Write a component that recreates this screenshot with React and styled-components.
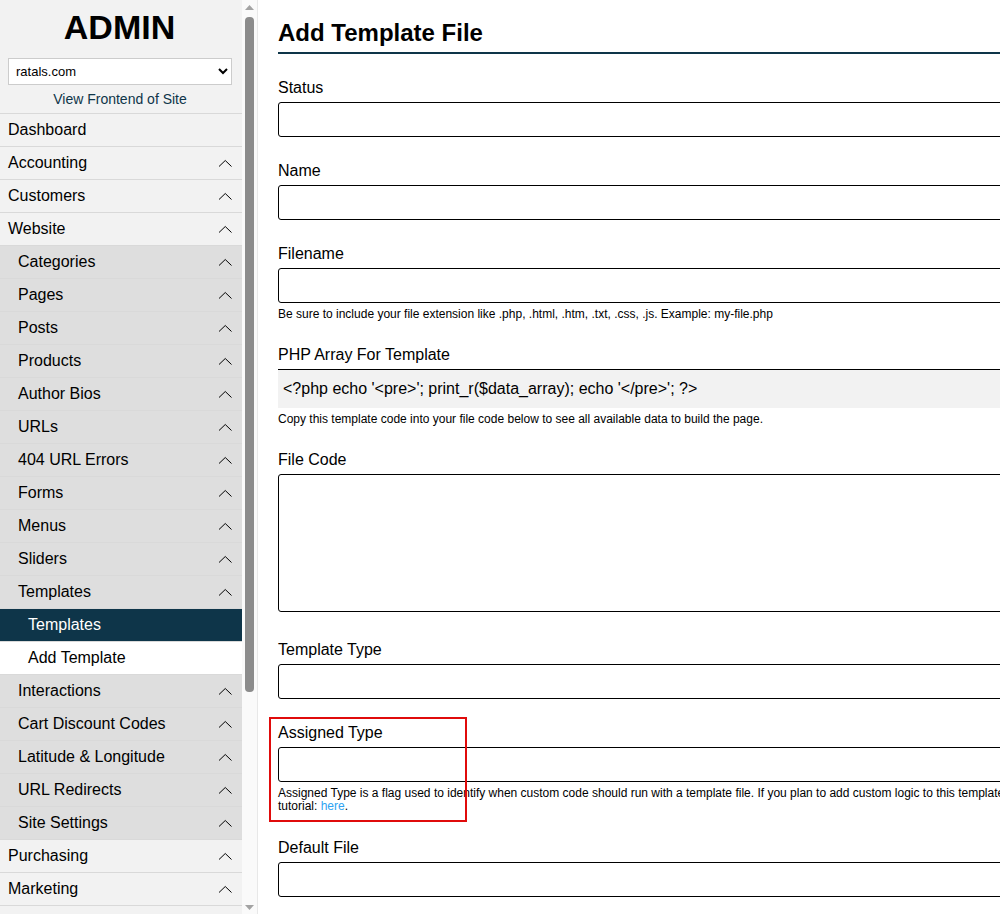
import { createGlobalStyle } from 'styled-components';
import styled from 'styled-components';

const GlobalStyle = createGlobalStyle`
	html, body {
		margin: 0;
		height: 100%;
		overflow: hidden;
		background: #fff;
		font-family: "Liberation Sans", Arial, sans-serif;
		color: #000;
	}
`;

const Page = styled.div`
	display: flex;
	width: 1000px;
	height: 914px;
	overflow: hidden;
`;

const Sidebar = styled.aside`
	flex: 0 0 258px;
	display: flex;
	height: 914px;
	box-sizing: border-box;
	border-right: 1px solid #e8e8e8;
	overflow: hidden;
`;

const SidebarInner = styled.div`
	flex: 0 0 242px;
	background: #f2f2f2;
	overflow: hidden;
`;

const Brand = styled.h1`
	margin: 0;
	padding: 7px 3px 0 0;
	height: 50px;
	box-sizing: border-box;
	font-size: 34px;
	line-height: 40px;
	font-weight: 700;
	text-align: center;
`;

const SiteSelect = styled.select`
	display: block;
	box-sizing: border-box;
	width: 224px;
	height: 27px;
	margin: 8px 0 0 8px;
	padding: 0 3px;
	border: 1px solid #ccc;
	background-color: #fff;
	font-family: inherit;
	font-size: 13px;
	color: #000;
`;

const FrontendLink = styled.a`
	display: block;
	height: 28px;
	padding-right: 2px;
	font-size: 14px;
	line-height: 29px;
	text-align: center;
	color: #0e3549;
`;

const NavRow = styled.div`
	display: flex;
	align-items: center;
	justify-content: space-between;
	box-sizing: border-box;
	height: 33px;
	padding: 0 8px 1px ${props => props.$indent}px;
	border-top: 1px solid #d9d9d9;
	background: ${props => props.$bg};
	color: ${props => props.$color};
	font-size: 16px;
`;

const Chevron = styled.svg`
	display: block;
	width: 14px;
	height: 8px;
	margin: 1px 2px 0 0;
	fill: none;
	stroke: #000;
	stroke-width: 1;
`;

const Scrollbar = styled.div`
	flex: 0 0 15px;
	display: flex;
	flex-direction: column;
	align-items: center;
	background: #fafafa;
`;

const ArrowButton = styled.svg`
	flex: 0 0 5px;
	width: 9px;
	height: 5px;
	margin: ${props => props.$margin};
	fill: #a3a3a3;
`;

const Thumb = styled.div`
	flex: 0 0 675px;
	width: 9px;
	border-radius: 4px;
	background: #8c8c8c;
`;

const ScrollSpacer = styled.div`
	flex: 1;
`;

const Main = styled.main`
	flex: 0 0 835px;
	box-sizing: border-box;
	padding: 0 0 0 20px;
`;

const Title = styled.h2`
	margin: 18px 0 0;
	padding-bottom: 5px;
	height: 36px;
	box-sizing: border-box;
	border-bottom: 2px solid #0e3549;
	font-size: 24px;
	line-height: 30px;
	font-weight: 700;
`;

const Field = styled.div`
	margin-top: ${props => props.$top}px;
`;

const Label = styled.label`
	display: block;
	height: 23px;
	font-size: 16px;
	line-height: 18px;
`;

const Input = styled.input`
	display: block;
	box-sizing: border-box;
	width: 100%;
	height: 35px;
	border: 1px solid #000;
	border-radius: 3px;
	background: #fff;
`;

const CodeArea = styled.textarea`
	display: block;
	box-sizing: border-box;
	width: 100%;
	height: 138px;
	border: 1px solid #000;
	border-radius: 3px;
	background: #fff;
	resize: none;
`;

const Help = styled.p`
	margin: ${props => props.$gap || 4}px 0 0;
	font-size: 12px;
	line-height: ${props => props.$line || 14}px;
`;

const HelpLink = styled.a`
	color: #2ea3f2;
`;

const CodeSample = styled.div`
	box-sizing: border-box;
	height: 39px;
	padding-left: 5px;
	border-top: 1px solid #000;
	background: #f2f2f2;
	font-size: 16px;
	line-height: 37px;
`;

const Outline = styled.div`
	position: absolute;
	left: 269px;
	top: 717px;
	width: 198px;
	height: 105px;
	box-sizing: border-box;
	border: 2px solid #e00b0b;
	pointer-events: none;
`;

const sidebarItems = [
	{ label: 'Dashboard', level: 0, noChevron: true },
	{ label: 'Accounting', level: 0 },
	{ label: 'Customers', level: 0 },
	{ label: 'Website', level: 0 },
	{ label: 'Categories', level: 1 },
	{ label: 'Pages', level: 1 },
	{ label: 'Posts', level: 1 },
	{ label: 'Products', level: 1 },
	{ label: 'Author Bios', level: 1 },
	{ label: 'URLs', level: 1 },
	{ label: '404 URL Errors', level: 1 },
	{ label: 'Forms', level: 1 },
	{ label: 'Menus', level: 1 },
	{ label: 'Sliders', level: 1 },
	{ label: 'Templates', level: 1 },
	{ label: 'Templates', level: 2, active: true },
	{ label: 'Add Template', level: 2 },
	{ label: 'Interactions', level: 1 },
	{ label: 'Cart Discount Codes', level: 1 },
	{ label: 'Latitude & Longitude', level: 1 },
	{ label: 'URL Redirects', level: 1 },
	{ label: 'Site Settings', level: 1 },
	{ label: 'Purchasing', level: 0 },
	{ label: 'Marketing', level: 0 },
	{ label: '', level: 0, noChevron: true }
];

const levelBg = ['#f2f2f2', '#dedede', '#fff'];

const App = () => (
	<>
		<GlobalStyle />
		<Page>
			<Sidebar>
				<SidebarInner>
					<Brand>ADMIN</Brand>
					<SiteSelect defaultValue="ratals.com">
						<option>ratals.com</option>
					</SiteSelect>
					<FrontendLink>View Frontend of Site</FrontendLink>
					{sidebarItems.map((item, index) => (
						<NavRow
							key={index}
							$indent={8 + item.level * 10}
							$bg={item.active ? '#0e3549' : levelBg[item.level]}
							$color={item.active ? '#fff' : '#000'}
						>
							{item.label}
							{!item.noChevron && item.level < 2 && (
								<Chevron viewBox="0 0 14 8">
									<path d="M1 7.5 L7.25 1.5 L13.5 7.5" />
								</Chevron>
							)}
						</NavRow>
					))}
				</SidebarInner>
				<Scrollbar>
					<ArrowButton viewBox="0 0 9 5" $margin="5px 0 7px">
						<path d="M4.5 0 L9 5 L0 5 Z" />
					</ArrowButton>
					<Thumb />
					<ScrollSpacer />
					<ArrowButton viewBox="0 0 9 5" $margin="0 0 4px">
						<path d="M0 0 L9 0 L4.5 5 Z" />
					</ArrowButton>
				</Scrollbar>
			</Sidebar>
			<Main>
				<Title>Add Template File</Title>
				<Field $top={25}>
					<Label>Status</Label>
					<Input />
				</Field>
				<Field $top={25}>
					<Label>Name</Label>
					<Input />
				</Field>
				<Field $top={25}>
					<Label>Filename</Label>
					<Input />
					<Help>Be sure to include your file extension like .php, .html, .htm, .txt, .css, .js. Example: my-file.php</Help>
				</Field>
				<Field $top={25}>
					<Label>PHP Array For Template</Label>
					<CodeSample>{"<?php echo '<pre>'; print_r($data_array); echo '</pre>'; ?>"}</CodeSample>
					<Help>Copy this template code into your file code below to see all available data to build the page.</Help>
				</Field>
				<Field $top={25}>
					<Label>File Code</Label>
					<CodeArea />
				</Field>
				<Field $top={29}>
					<Label>Template Type</Label>
					<Input />
				</Field>
				<Field $top={25}>
					<Label>Assigned Type</Label>
					<Input />
					<Help $gap={5} $line={13}>Assigned Type is a flag used to identify when custom code should run with a template file. If you plan to add custom logic to this template, see this tutorial: <HelpLink>here</HelpLink>.</Help>
				</Field>
				<Field $top={26}>
					<Label>Default File</Label>
					<Input />
				</Field>
			</Main>
			<Outline />
		</Page>
	</>
);

export default App;
